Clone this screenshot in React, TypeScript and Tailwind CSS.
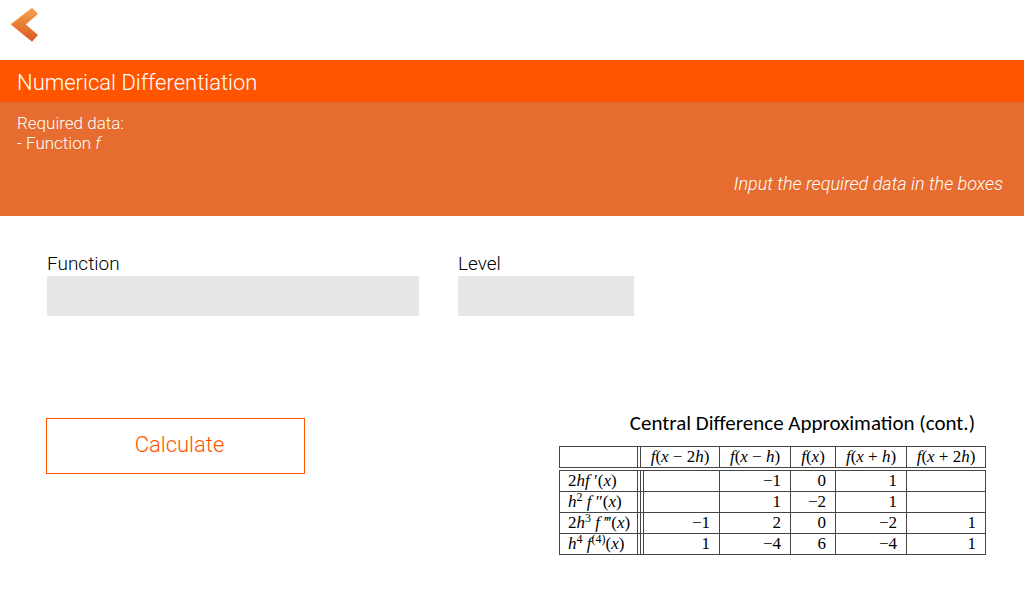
import type { ReactNode } from "react";

const F = () => <i>f</i>;

const headings: ReactNode[] = [
  <><i>f</i>(<i>x</i> − 2<i>h</i>)</>,
  <><i>f</i>(<i>x</i> − <i>h</i>)</>,
  <><i>f</i>(<i>x</i>)</>,
  <><i>f</i>(<i>x</i> + <i>h</i>)</>,
  <><i>f</i>(<i>x</i> + 2<i>h</i>)</>,
];

function Sup({ children }: { children: ReactNode }) {
  return <sup className="text-[12px] leading-none">{children}</sup>;
}

const rows: { name: ReactNode; values: string[] }[] = [
  { name: <>2<i>hf</i> ′(<i>x</i>)</>, values: ["", "−1", "0", "1", ""] },
  { name: <><i>h</i><Sup>2</Sup> <F /> ″(<i>x</i>)</>, values: ["", "1", "−2", "1", ""] },
  { name: <>2<i>h</i><Sup>3</Sup> <F /> ‴(<i>x</i>)</>, values: ["−1", "2", "0", "−2", "1"] },
  { name: <><i>h</i><Sup>4</Sup> <F /><Sup>(4)</Sup>(<i>x</i>)</>, values: ["1", "−4", "6", "−4", "1"] },
];

function CoefficientTable() {
  return (
    <table className="w-[427px] table-fixed border-separate border-spacing-0 font-['Liberation_Serif',serif] text-[17px] leading-5 text-black">
      <caption className="pr-[11px] pb-[9px] text-right font-['Carlito','Lato',sans-serif] text-[21px] leading-7 font-normal whitespace-nowrap">
        Central Difference Approximation (cont.)
      </caption>
      <colgroup>
        <col className="w-[79px]" />
        <col className="w-[2px]" />
        <col className="w-[3px]" />
        <col className="w-[76px]" />
        <col className="w-[71px]" />
        <col className="w-[45px]" />
        <col className="w-[71px]" />
        <col className="w-[80px]" />
      </colgroup>
      <thead>
        <tr className="h-[22px]">
          <td className="border border-[#444] p-0" />
          <td className="border-y border-[#444] p-0" />
          {headings.map((heading, i) => (
            <th
              key={i}
              scope="col"
              colSpan={i === 0 ? 2 : 1}
              className="border-y border-l border-[#444] p-0 text-center font-normal whitespace-nowrap last:border-r"
            >
              {heading}
            </th>
          ))}
        </tr>
        <tr className="h-[2px]">
          <td colSpan={8} className="p-0" />
        </tr>
      </thead>
      <tbody>
        {rows.map((row, i) => (
          <tr key={i} className="h-[21px] first:h-[22px] [&:first-child>*]:border-t">
            <th
              scope="row"
              className="border-x border-b border-[#444] p-0 pl-2 text-left font-normal whitespace-nowrap"
            >
              {row.name}
            </th>
            <td className="border-b border-[#444] p-0" />
            <td className="border-b border-l border-[#444] p-0" />
            {row.values.map((value, j) => (
              <td
                key={j}
                className="border-b border-l border-[#444] p-0 pr-[9px] text-right last:border-r"
              >
                {value}
              </td>
            ))}
          </tr>
        ))}
      </tbody>
    </table>
  );
}

function BackIcon() {
  return (
    <svg viewBox="0 0 28 36" className="h-9 w-7" aria-hidden="true">
      <defs>
        <linearGradient id="back-fill" x1="0" y1="0" x2="0" y2="1">
          <stop offset="0" stopColor="#f4a350" />
          <stop offset="0.5" stopColor="#e97b35" />
          <stop offset="1" stopColor="#d85a25" />
        </linearGradient>
      </defs>
      <path d="M22 0.8 28 7 15.8 17.5 28 28 22 34.8 0.8 17.5Z" fill="url(#back-fill)" />
      <path d="M1 17 22 1" fill="none" stroke="#f3c477" strokeWidth="1" />
    </svg>
  );
}

export default function App() {
  return (
    <div className="min-h-screen bg-white font-['Roboto',sans-serif] font-light text-black">
      <nav className="flex h-[60px] items-start px-[10px] pt-[7px]">
        <button type="button" aria-label="Back">
          <BackIcon />
        </button>
      </nav>

      <header className="text-white">
        <h1 className="bg-[#ff5500] px-[17px] pt-2 pb-1 text-[22px] leading-[30px] font-light">
          Numerical Differentiation
        </h1>
        <div className="bg-[#e66c2f] px-[17px] pt-[11px] pb-[22px] leading-5">
          <p className="text-[17px]">Required data:</p>
          <p className="text-[17px]">
            - Function <i>f</i>
          </p>
          <p className="pt-[21px] pr-1 text-right text-[18px] italic">
            Input the required data in the boxes
          </p>
        </div>
      </header>

      <main className="pt-9 pr-[38px] pl-[46px]">
        <form>
          <div className="flex gap-[39px] pl-px">
            <label className="block w-full max-w-[372px] text-[19px] leading-6">
              Function
              <input type="text" className="block h-10 w-full bg-[#e7e7e7] px-2 outline-none" />
            </label>
            <label className="block w-full max-w-[176px] text-[19px] leading-6">
              Level
              <input type="text" className="block h-10 w-full bg-[#e7e7e7] px-2 outline-none" />
            </label>
          </div>
          <div className="flex items-start justify-between pt-[93px]">
            <button
              type="submit"
              className="mt-[9px] h-14 w-[259px] border border-[#ff5500] pb-1 pl-2 text-[22px] text-[#ff5500]"
            >
              Calculate
            </button>
            <CoefficientTable />
          </div>
        </form>
      </main>
    </div>
  );
}
